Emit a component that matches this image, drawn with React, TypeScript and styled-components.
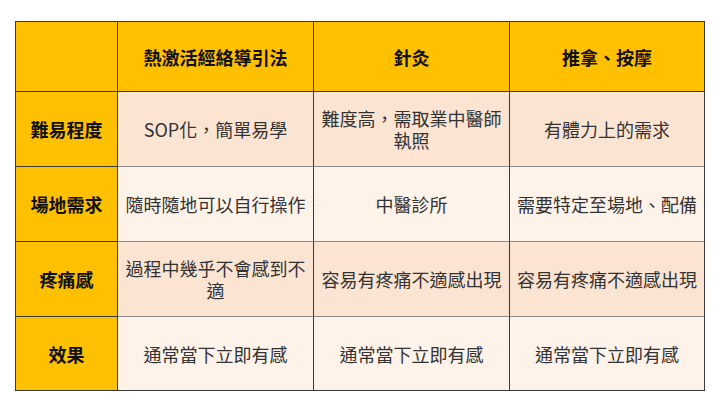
import React from "react";
import styled, { createGlobalStyle } from "styled-components";

const Global = createGlobalStyle`
  html, body { margin: 0; padding: 0; background: #ffffff; }
  body { font-family: "Noto Sans CJK TC", "Noto Sans", sans-serif; }
`;

const Page = styled.div`
  width: 720px;
  height: 405px;
  padding: 21px 0 0 15px;
  box-sizing: border-box;
`;

const Table = styled.div`
  display: grid;
  grid-template-columns: 102px 196px 196px 194px;
  grid-template-rows: 70px 75px 75px 75px 73px;
  width: 690px;
  box-sizing: border-box;
  border: 1px solid #3a3a3a;
`;

type CellProps = { $kind: "head" | "label" | "odd" | "even"; $lastCol?: boolean; $lastRow?: boolean; $headRow?: boolean };

const bg = (k: CellProps["$kind"]) =>
  k === "head" || k === "label" ? "#FFC000" : k === "odd" ? "#FCE4D3" : "#FEF2E9";

const Cell = styled.div<CellProps>`
  box-sizing: border-box;
  display: flex;
  align-items: center;
  justify-content: center;
  text-align: center;
  padding: 0 6px;
  background: ${(p) => bg(p.$kind)};
  border-right: ${(p) => (p.$lastCol ? "none" : "1px solid #3a3a3a")};
  border-bottom: ${(p) =>
    p.$lastRow ? "none" : p.$headRow || p.$kind === "label" ? "1px solid #3a3a3a" : "1px solid #8c8c8c"};
  font-size: 18px;
  line-height: 22px;
  font-weight: ${(p) => (p.$kind === "head" || p.$kind === "label" ? 700 : 400)};
  color: ${(p) => (p.$kind === "head" || p.$kind === "label" ? "#111111" : "#333333")};
`;

const headers = ["", "熱激活經絡導引法", "針灸", "推拿、按摩"];
const rows: { label: string; cells: string[] }[] = [
  { label: "難易程度", cells: ["SOP化，簡單易學", "難度高，需取業中醫師執照", "有體力上的需求"] },
  { label: "場地需求", cells: ["隨時隨地可以自行操作", "中醫診所", "需要特定至場地、配備"] },
  { label: "疼痛感", cells: ["過程中幾乎不會感到不適", "容易有疼痛不適感出現", "容易有疼痛不適感出現"] },
  { label: "效果", cells: ["通常當下立即有感", "通常當下立即有感", "通常當下立即有感"] },
];

export default function App() {
  return (
    <>
      <Global />
      <Page>
        <Table>
          {headers.map((h, i) => (
            <Cell key={"h" + i} $kind="head" $headRow $lastCol={i === 3}>
              {h}
            </Cell>
          ))}
          {rows.map((r, ri) => {
            const last = ri === rows.length - 1;
            const kind = ri % 2 === 0 ? "odd" : "even";
            return (
              <React.Fragment key={r.label}>
                <Cell $kind="label" $lastRow={last}>
                  {r.label}
                </Cell>
                {r.cells.map((c, ci) => (
                  <Cell key={ci} $kind={kind} $lastRow={last} $lastCol={ci === 2}>
                    {c}
                  </Cell>
                ))}
              </React.Fragment>
            );
          })}
        </Table>
      </Page>
    </>
  );
}
